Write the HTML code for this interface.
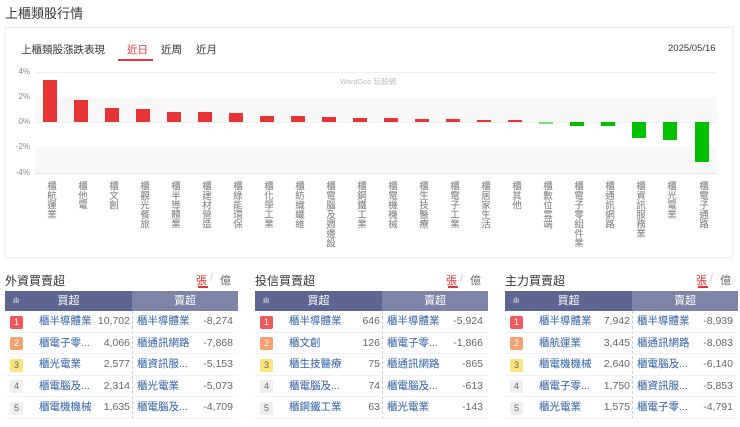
<!DOCTYPE html>
<html><head><meta charset="utf-8"><style>
*{margin:0;padding:0;box-sizing:border-box}
body{width:740px;height:427px;background:#fff;font-family:"Liberation Sans","Noto Sans CJK TC",sans-serif;position:relative;overflow:hidden;color:#333}
.a{position:absolute}
.card{left:5px;top:27px;width:728px;height:231px;border:1px solid #eee;box-shadow:0 0 3px rgba(0,0,0,.06);background:#fff}
.yl{font-size:8px;color:#888;left:10px;width:20px;text-align:right}
.bar{width:14px}
.r{background:#e83435}.g{background:#00c000}
.lbl{writing-mode:vertical-rl;font-size:9.5px;color:#777;top:181px;width:14px;line-height:14px}
.tt{font-size:12px;color:#333;top:272px}
.unit{font-size:11px;top:272px}
.hd{top:291px;height:20px;color:#fff;font-size:11px;line-height:20px;text-align:center}
.row{height:21.6px;font-size:10.5px;line-height:21.6px}
.rk{width:13px;height:13px;font-size:9px;line-height:13px;text-align:center;border-radius:2px;display:inline-block}
.nm{color:#2c5fa8}
.n{color:#666}
</style></head><body>
<div class="a" style="left:5px;top:3px;font-size:13px;color:#333">上櫃類股行情</div>
<div class="a card"></div>
<div class="a" style="left:21px;top:42px;font-size:10.5px;color:#333">上櫃類股漲跌表現</div>
<div class="a" style="left:127px;top:42px;font-size:10.5px;color:#e83435">近日</div>
<div class="a" style="left:118px;top:59px;width:35px;height:2px;background:#e83435"></div>
<div class="a" style="left:161px;top:42px;font-size:10.5px;color:#333">近周</div>
<div class="a" style="left:196px;top:42px;font-size:10.5px;color:#333">近月</div>
<div class="a" style="left:668px;top:43px;font-size:9.5px;color:#333">2025/05/16</div>
<div class="a" style="left:35px;top:97px;width:682px;height:25px;background:#f8f8f8"></div>
<div class="a" style="left:35px;top:147px;width:682px;height:26px;background:#f8f8f8"></div>
<div class="a" style="left:35px;top:72px;width:682px;height:1px;background:#f0f0f0"></div>
<div class="a" style="left:35px;top:122px;width:682px;height:1px;background:#f0f0f0"></div>
<div class="a" style="left:35px;top:173px;width:682px;height:1px;background:#e6e6e6"></div>
<div class="a" style="left:340px;top:76px;font-size:7.5px;color:#bbb">WantGoo 玩股網</div>
<div class="a yl" style="top:67px">4%</div>
<div class="a yl" style="top:92px">2%</div>
<div class="a yl" style="top:117px">0%</div>
<div class="a yl" style="top:142px">-2%</div>
<div class="a yl" style="top:168px">-4%</div>
<div class="a bar r" style="left:43px;top:80px;height:42px"></div>
<div class="a bar r" style="left:74px;top:100px;height:22px"></div>
<div class="a bar r" style="left:105px;top:108px;height:14px"></div>
<div class="a bar r" style="left:136px;top:109px;height:13px"></div>
<div class="a bar r" style="left:167px;top:112px;height:10px"></div>
<div class="a bar r" style="left:198px;top:112px;height:10px"></div>
<div class="a bar r" style="left:229px;top:113px;height:9px"></div>
<div class="a bar r" style="left:260px;top:116px;height:6px"></div>
<div class="a bar r" style="left:291px;top:116px;height:6px"></div>
<div class="a bar r" style="left:322px;top:117px;height:5px"></div>
<div class="a bar r" style="left:353px;top:118px;height:4px"></div>
<div class="a bar r" style="left:384px;top:118px;height:4px"></div>
<div class="a bar r" style="left:415px;top:118.5px;height:3.5px"></div>
<div class="a bar r" style="left:446px;top:119px;height:3px"></div>
<div class="a bar r" style="left:477px;top:120px;height:2px"></div>
<div class="a bar r" style="left:508px;top:120px;height:2px"></div>
<div class="a bar" style="left:539px;top:122px;height:1.5px;background:#7ddc7d"></div>
<div class="a bar g" style="left:570px;top:122px;height:4px"></div>
<div class="a bar g" style="left:601px;top:122px;height:4px"></div>
<div class="a bar g" style="left:632px;top:122px;height:16px"></div>
<div class="a bar g" style="left:663px;top:122px;height:18px"></div>
<div class="a bar g" style="left:695px;top:122px;height:40px"></div>
<div class="a lbl" style="left:43px">櫃航運業</div>
<div class="a lbl" style="left:74px">櫃他電</div>
<div class="a lbl" style="left:105px">櫃文創</div>
<div class="a lbl" style="left:136px">櫃觀光餐旅</div>
<div class="a lbl" style="left:167px">櫃半導體業</div>
<div class="a lbl" style="left:198px">櫃建材營造</div>
<div class="a lbl" style="left:229px">櫃綠能環保</div>
<div class="a lbl" style="left:260px">櫃化學工業</div>
<div class="a lbl" style="left:291px">櫃紡織纖維</div>
<div class="a lbl" style="left:322px">櫃電腦及週邊設</div>
<div class="a lbl" style="left:353px">櫃鋼鐵工業</div>
<div class="a lbl" style="left:384px">櫃電機機械</div>
<div class="a lbl" style="left:415px">櫃生技醫療</div>
<div class="a lbl" style="left:446px">櫃電子工業</div>
<div class="a lbl" style="left:477px">櫃居家生活</div>
<div class="a lbl" style="left:508px">櫃其他</div>
<div class="a lbl" style="left:539px">櫃數位雲端</div>
<div class="a lbl" style="left:570px">櫃電子零組件業</div>
<div class="a lbl" style="left:601px">櫃通訊網路</div>
<div class="a lbl" style="left:632px">櫃資訊服務業</div>
<div class="a lbl" style="left:663px">櫃光電業</div>
<div class="a lbl" style="left:695px">櫃電子通路</div>

<div id="t"></div>
<script>
const P=[
 {x:5,t:"外資買賣超",b:[["櫃半導體業","10,702"],["櫃電子零...","4,066"],["櫃光電業","2,577"],["櫃電腦及...","2,314"],["櫃電機機械","1,635"]],s:[["櫃半導體業","-8,274"],["櫃通訊網路","-7,868"],["櫃資訊服...","-5,153"],["櫃光電業","-5,073"],["櫃電腦及...","-4,709"]]},
 {x:255,t:"投信買賣超",b:[["櫃半導體業","646"],["櫃文創","126"],["櫃生技醫療","75"],["櫃電腦及...","74"],["櫃鋼鐵工業","63"]],s:[["櫃半導體業","-5,924"],["櫃電子零...","-1,866"],["櫃通訊網路","-865"],["櫃電腦及...","-613"],["櫃光電業","-143"]]},
 {x:505,t:"主力買賣超",b:[["櫃半導體業","7,942"],["櫃航運業","3,445"],["櫃電機機械","2,640"],["櫃電子零...","1,750"],["櫃光電業","1,575"]],s:[["櫃半導體業","-8,939"],["櫃通訊網路","-8,083"],["櫃電腦及...","-6,140"],["櫃資訊服...","-5,853"],["櫃電子零...","-4,791"]]}];
const RC=[["#f0585a","#fff"],["#f7a070","#fff"],["#fbe27a","#666"],["#eeeeee","#666"],["#eeeeee","#666"]];
let h="";
for(const p of P){const x=p.x;
h+=`<div class="a tt" style="left:${x}px">${p.t}</div>`;
h+=`<div class="a unit" style="left:${x+191}px;color:#e83435">張</div><div class="a" style="left:${x+193}px;top:286px;width:10px;height:2px;background:#e83435"></div><div class="a unit" style="left:${x+205}px;color:#ccc">/</div><div class="a unit" style="left:${x+215}px;color:#666">億</div>`;
h+=`<div class="a hd" style="left:${x}px;width:127px;background:#5d6690"><span style="position:absolute;left:8px;font-size:8px">ılı</span>買超</div>`;
h+=`<div class="a hd" style="left:${x+127}px;width:106px;background:#7c85a8">賣超</div>`;
h+=`<div class="a" style="left:${x+127}px;top:311px;height:108px;border-left:1px dashed #ccc"></div>`;
for(let i=0;i<5;i++){const y=311+i*21.6;
h+=`<div class="a row" style="left:${x}px;top:${y}px;width:233px;border-bottom:1px solid #f2f2f2"></div>`;
h+=`<div class="a rk" style="left:${x+5}px;top:${y+4.5}px;background:${RC[i][0]};color:${RC[i][1]}">${i+1}</div>`;
h+=`<div class="a row nm" style="left:${x+34}px;top:${y}px">${p.b[i][0]}</div>`;
h+=`<div class="a row n" style="left:${x+70}px;top:${y}px;width:55px;text-align:right">${p.b[i][1]}</div>`;
h+=`<div class="a row nm" style="left:${x+132}px;top:${y}px">${p.s[i][0]}</div>`;
h+=`<div class="a row n" style="left:${x+170}px;top:${y}px;width:58px;text-align:right">${p.s[i][1]}</div>`;
}}
document.getElementById("t").innerHTML=h;
</script>
</body></html>
